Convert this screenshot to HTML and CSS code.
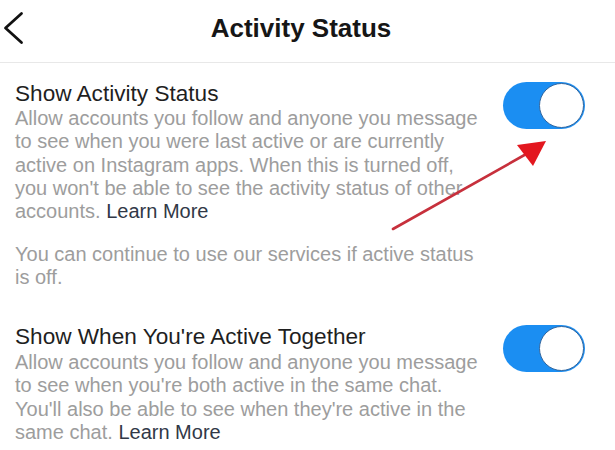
FILE: index.html
```html
<!DOCTYPE html>
<html lang="en">
<head>
<meta charset="utf-8">
<title>Activity Status</title>
<link rel="stylesheet" href="styles.css">
</head>
<body>
<div class="screen">
  <header class="topbar">
    <svg class="back" viewBox="0 0 24 34" width="24" height="34" aria-hidden="true">
      <path d="M21.5 2.5 L5.5 17 L21.5 31.5" fill="none" stroke="#111" stroke-width="2.8" stroke-linecap="round" stroke-linejoin="round"/>
    </svg>
    <h1 class="title">Activity Status</h1>
    <span></span>
  </header>

  <section class="setting first">
    <div class="text">
      <h2 class="label">Show Activity Status</h2>
      <p class="desc">Allow accounts you follow and anyone you message to see when you were last active or are currently active on Instagram apps. When this is turned off, you won't be able to see the activity status of other accounts. <span class="link">Learn More</span></p>
      <p class="desc note">You can continue to use our services if active status is off.</p>
    </div>
    <div class="toggle"><span class="knob"></span></div>
  </section>

  <section class="setting second">
    <div class="text">
      <h2 class="label">Show When You're Active Together</h2>
      <p class="desc">Allow accounts you follow and anyone you message to see when you're both active in the same chat. You'll also be able to see when they're active in the same chat. <span class="link">Learn More</span></p>
    </div>
    <div class="toggle"><span class="knob"></span></div>
  </section>

  <svg class="arrow" viewBox="0 0 615 450" width="615" height="450" aria-hidden="true">
    <line x1="393" y1="229" x2="528" y2="153" stroke="#c7303c" stroke-width="2.6" stroke-linecap="round"/>
    <polygon points="517,145 546,141 533,166" fill="#e3171f"/>
  </svg>
</div>
</body>
</html>
```

FILE: styles.css
```css
* { box-sizing: border-box; }

html, body {
  margin: 0;
  padding: 0;
  background: #ffffff;
}

body {
  font-family: "Liberation Sans", Arial, sans-serif;
  color: #222222;
}

.screen {
  position: relative;
  width: 615px;
  height: 450px;
  overflow: hidden;
}

.topbar {
  display: grid;
  grid-template-columns: 40px 1fr 40px;
  align-items: center;
  height: 63px;
  padding: 0 13px 6px 0;
  border-bottom: 1px solid #e8e8e8;
}

.back {
  display: block;
}

.title {
  margin: 0;
  text-align: center;
  font-size: 26px;
  font-weight: 700;
  line-height: 30px;
  color: #161616;
}

.setting {
  display: flex;
  align-items: flex-start;
  padding: 0 30px 0 15px;
}

.setting.first {
  padding-top: 18px;
}

.setting.second {
  margin-top: 34.6px;
}

.text {
  width: 472px;
}

.label {
  margin: 0;
  font-size: 22.6px;
  font-weight: 400;
  line-height: 26px;
  color: #1f1f1f;
}

.second .label {
  margin-bottom: 1px;
}

.desc {
  margin: 0;
  font-size: 20px;
  line-height: 23.3px;
  color: #9d9d9d;
}

.desc.note {
  margin-top: 19.5px;
}

.link {
  color: #313847;
}

.toggle {
  display: flex;
  justify-content: flex-end;
  align-items: center;
  flex: none;
  width: 82px;
  height: 47px;
  margin-left: auto;
  margin-top: 1px;
  padding: 1px;
  border-radius: 24px;
  background: #1b8ef2;
}

.knob {
  display: block;
  width: 45px;
  height: 45px;
  border-radius: 50%;
  background: #ffffff;
  border: 1.5px solid #33679f;
}

.arrow {
  position: absolute;
  top: 0;
  left: 0;
  pointer-events: none;
}
```
